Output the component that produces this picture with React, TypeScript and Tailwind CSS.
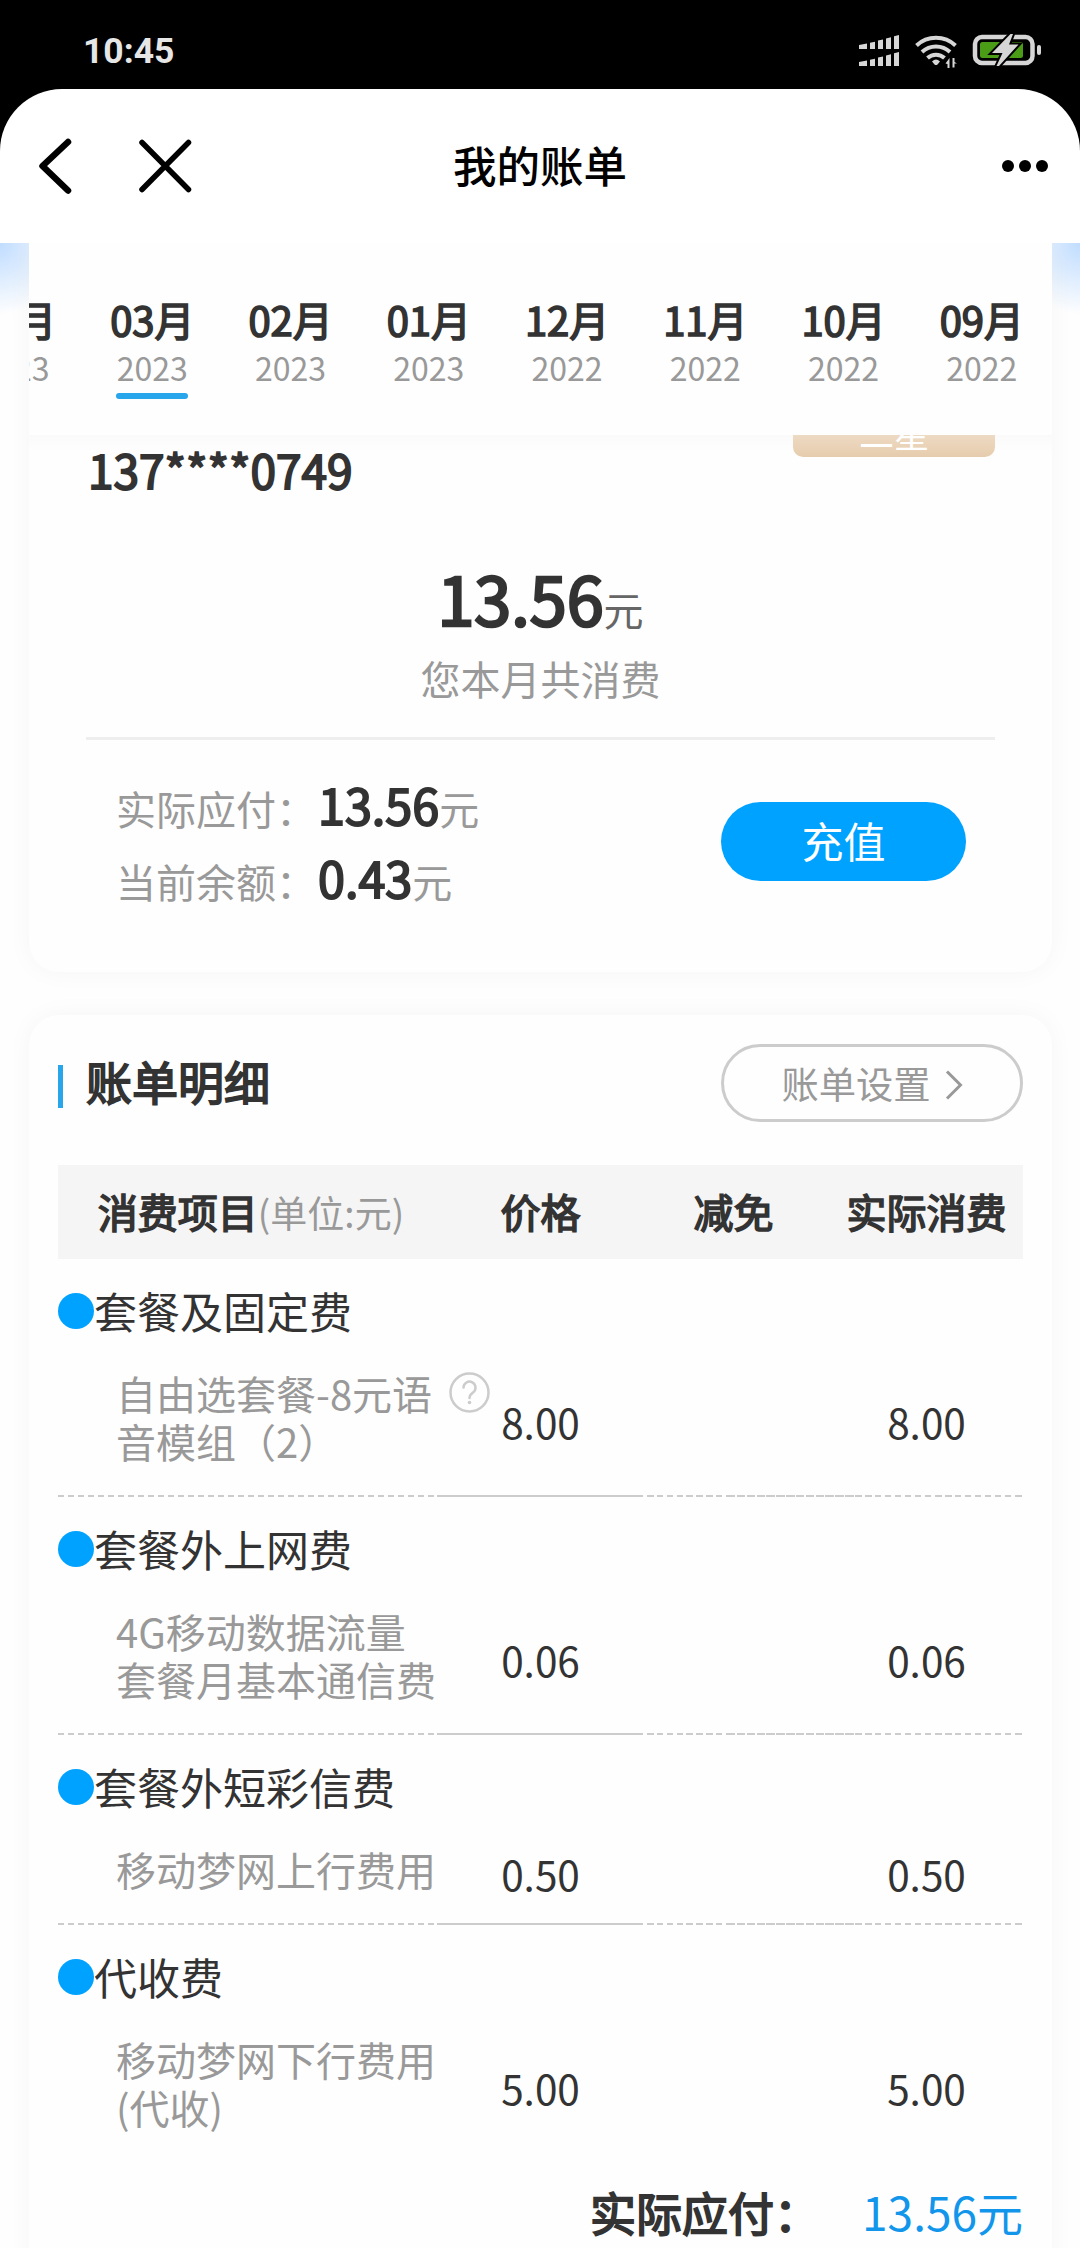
import { clsx } from 'clsx';

interface Month {
  month: string;
  year: string;
  active?: boolean;
}

interface BillSection {
  title: string;
  lines: string[];
  price: string;
  actual: string;
  help?: boolean;
}

const months: Month[] = [
  { month: '04月', year: '2023' },
  { month: '03月', year: '2023', active: true },
  { month: '02月', year: '2023' },
  { month: '01月', year: '2023' },
  { month: '12月', year: '2022' },
  { month: '11月', year: '2022' },
  { month: '10月', year: '2022' },
  { month: '09月', year: '2022' },
];

const sections: BillSection[] = [
  { title: '套餐及固定费', lines: ['自由选套餐-8元语', '音模组（2）'], price: '8.00', actual: '8.00', help: true },
  { title: '套餐外上网费', lines: ['4G移动数据流量', '套餐月基本通信费'], price: '0.06', actual: '0.06' },
  { title: '套餐外短彩信费', lines: ['移动梦网上行费用'], price: '0.50', actual: '0.50' },
  { title: '代收费', lines: ['移动梦网下行费用', '(代收)'], price: '5.00', actual: '5.00' },
];

// heavier text keeps the regular advance widths, only the strokes get thicker
const strong = '[-webkit-text-stroke:0.04em_currentColor]';

function StatusBar() {
  return (
    <div className="flex h-[89px] items-start justify-between bg-black pl-[83px] pr-[39px]">
      <span className="mt-[31px] font-[Roboto] text-[35.500px] leading-[41px] font-bold text-[#e6e6e6]">10:45</span>
      <svg className="mt-[33px]" width="183" height="36" viewBox="858 33 183 36" fill="#d6d6d6">
        <path d="M859 49v-4l8-1.6V49zM870 49v-6.2l5-1V49zM878 49v-8.4l5-1.2V49zM886 49V38.4l5-1.2V49zM894 49V36.2l5-1.2v14z" />
        <path d="M859 66v-4l8-1.6V66zM870 66v-6.2l5-1V66zM878 66v-8.4l5-1.2V66zM886 66V55.4l5-1.2V66zM894 66V53.2l5-1.2v14z" />
        <g fill="none" stroke="#d6d6d6" strokeWidth="4">
          <path d="M916.5 45.5a28.5 28.5 0 0 1 39 0" />
          <path d="M922 52a20.5 20.5 0 0 1 28 0" />
          <path d="M927.500 58a12.500 12.500 0 0 1 17 0" />
        </g>
        <path d="M932 61.500q4-4 8 0l-2.500 3q-1.500 1.200-3 0z" />
        <path d="M949.500 58v10h-2v-4l-2-.5zM952.500 67.500V58h2v4l2.500 1.500h-2.500v4z" />
        <rect x="975" y="37" width="57.500" height="26" rx="7" fill="none" stroke="#d6d6d6" strokeWidth="4.500" />
        <rect x="980" y="42" width="43" height="16" rx="2.500" fill="#4a9c17" />
        <rect x="1037" y="45" width="4" height="10" rx="2" />
        <path
          d="M1010.500 34L992 53h10.500l-6 13h2.500l19.500-21.500h-9.500l4-10.500z"
          stroke="#000"
          strokeWidth="4"
          paintOrder="stroke"
        />
      </svg>
    </div>
  );
}

function NavBar() {
  return (
    <div className="relative z-10 bg-black">
      <div className="grid h-[154px] grid-cols-3 items-center rounded-t-[62px] bg-white px-[38px]">
        <svg width="156" height="60" viewBox="38 136 156 60" fill="none" stroke="#000" strokeLinecap="round" strokeLinejoin="round">
          <path d="M68 142L42.500 166l25.500 24.500" strokeWidth="6.500" />
          <path d="M142 142.500l46.500 47M188.500 142.500l-46.500 47" strokeWidth="5.500" />
        </svg>
        <h1 className="-mt-0.5 text-center text-[43.500px] leading-[56px] font-medium text-black">我的账单</h1>
        <div className="-mr-[6px] flex justify-end gap-[5px]">
          <i className="size-3 rounded-full bg-black" />
          <i className="size-3 rounded-full bg-black" />
          <i className="size-3 rounded-full bg-black" />
        </div>
      </div>
    </div>
  );
}

function MonthTabs() {
  return (
    <div className="relative z-10 h-[192px] overflow-hidden bg-[#fefefe] pt-[54px]">
      <div className="-ml-[84px] flex">
        {months.map((m) => (
          <div key={m.month} className="flex w-[138.25px] shrink-0 flex-col items-center">
            <span className={clsx('text-[40px] leading-[44px]', strong)}>{m.month}</span>
            <span className="mt-2 text-[32px] leading-9 text-[#999]">{m.year}</span>
            {m.active && <span className="mt-2 h-1.5 w-[72px] rounded-full bg-[#27a6ec]" />}
          </div>
        ))}
      </div>
    </div>
  );
}

function AmountLine({ label, value }: { label: string; value: string }) {
  return (
    <p className="h-[73.300px] text-[48.500px] leading-[75px] whitespace-nowrap">
      <span className="text-[40px] leading-none text-[#999]">{label}：</span>
      <span className={clsx('ml-0.5', strong)}>{value}</span>
      <span className="text-[40px] leading-none text-[#999]">元</span>
    </p>
  );
}

function SummaryCard() {
  return (
    <section className="h-[729px] rounded-b-[30px] bg-[#fefefe] shadow-[0_0_26px_rgba(0,0,0,0.04)]">
      <MonthTabs />
      <div className="flex items-start justify-between px-[57px] shadow-[inset_0_20px_18px_-14px_rgba(0,0,0,0.025)]">
        <span className={clsx('ml-0.5 text-[46px] leading-[68px]', strong)}>137****0749</span>
        <span className="-mt-[26px] h-12 w-[202px] rounded-[10px] bg-linear-to-b from-[#f6ebdd] to-[#e6ccad] text-center text-[35px] leading-[48px] text-white">
          二星
        </span>
      </div>
      <div className="mt-[53px] h-20 text-center text-[66.500px] leading-[82px]">
        <span className={strong}>13.56</span>
        <span className="text-[40px] leading-none text-[#666]">元</span>
      </div>
      <p className="mt-[17px] text-center text-[40px] leading-[50px] text-[#999]">您本月共消费</p>
      <div className="mx-[57px] mt-[34px] h-[3px] bg-[#eee]" />
      <div className="mt-[27px] flex items-center justify-between pr-[86px] pl-[87px]">
        <div>
          <AmountLine label="实际应付" value="13.56" />
          <AmountLine label="当前余额" value="0.43" />
        </div>
        <button className="mt-0.5 h-[79px] w-[245px] rounded-full bg-[#00a2ff] pb-0.5 text-[42px] leading-[60px] text-white">
          充值
        </button>
      </div>
    </section>
  );
}

function HelpIcon() {
  return (
    <svg className="-mt-0.5 shrink-0" width="41" height="41" viewBox="0 0 41 41" fill="none" stroke="#ccc" strokeWidth="2.500">
      <circle cx="20.500" cy="20.500" r="19" />
      <path d="M14.500 15.500a6 6 0 1 1 9.500 5c-2.300 1.700-3.500 2.700-3.500 5.500" strokeLinecap="round" />
      <circle cx="20.500" cy="30.500" r="1.800" fill="#ccc" stroke="none" />
    </svg>
  );
}

function DashedRule() {
  return (
    <div className="flex h-0.5">
      <div className="w-[379px] bg-[repeating-linear-gradient(90deg,#ccc_0_6px,transparent_6px_10px)]" />
      <div className="w-[206px] bg-[#ccc]" />
      <div className="ml-1 w-[80px] bg-[repeating-linear-gradient(90deg,#ccc_0_6.500px,transparent_6.500px_9.850px)]" />
      <div className="w-[128px] bg-[repeating-linear-gradient(90deg,#ccc_0_8.500px,transparent_8.500px_9.850px)]" />
      <div className="flex-1 bg-[repeating-linear-gradient(90deg,#ccc_0_6.500px,transparent_6.500px_10px)]" />
    </div>
  );
}

function SectionRow({ section }: { section: BillSection }) {
  return (
    <div className="pt-[34px]">
      <div className="flex h-9 items-center">
        <i className="size-9 shrink-0 rounded-full bg-[#00a2ff]" />
        <span className="-mt-0.5 text-[43px] leading-9">{section.title}</span>
      </div>
      <div className="mt-10 grid grid-cols-[386px_193px_193px_193px] items-center pb-[30px]">
        <div className="pl-[58px] text-[40px] leading-[48px] whitespace-nowrap text-[#999]">
          {section.lines.map((line, i) => (
            <div key={line} className="flex items-center gap-[17px]">
              <span>{line}</span>
              {section.help && i === 0 && <HelpIcon />}
            </div>
          ))}
        </div>
        <span className="pt-2.5 text-center text-[40.500px] leading-[38px]">{section.price}</span>
        <span />
        <span className="pt-2.5 text-center text-[40.500px] leading-[38px]">{section.actual}</span>
      </div>
    </div>
  );
}

function DetailCard() {
  return (
    <section className="mt-[43px] h-[1300px] rounded-t-[30px] bg-[#fefefe] px-[29px] pt-[29px] shadow-[0_0_26px_rgba(0,0,0,0.04)]">
      <div className="flex h-[78px] items-center">
        <i className="mt-[7px] h-[43px] w-[5px] bg-[#27a6ec]" />
        <h2 className={clsx('-mt-[7px] ml-[23px] text-[46px] leading-[60px]', strong)}>账单明细</h2>
        <button className="ml-auto flex h-[78px] w-[302px] items-center justify-center gap-[14px] rounded-full border-[3px] border-[#ccc] text-[37.300px] text-[#999]">
          <span className="leading-[50px]">账单设置</span>
          <svg className="mt-1" width="18" height="30" viewBox="0 0 18 30" fill="none" stroke="#999" strokeWidth="3">
            <path d="M2 1.500L15.500 15 2 28.500" />
          </svg>
        </button>
      </div>

      <div className="mt-[43px] grid h-[94px] grid-cols-[386px_193px_193px_193px] items-center bg-[#f5f5f5] pb-[3px] text-center text-[40px] leading-[60px] whitespace-nowrap">
        <span>
          <span className={strong}>消费项目</span>
          <span className="text-[37px] leading-none text-[#999]">(单位:元)</span>
        </span>
        <span className={strong}>价格</span>
        <span className={strong}>减免</span>
        <span className={strong}>实际消费</span>
      </div>

      {sections.map((section, i) => (
        <div key={section.title}>
          <SectionRow section={section} />
          {i < sections.length - 1 && <DashedRule />}
        </div>
      ))}

      <div className="mt-5 flex justify-end gap-[42px] text-[46px] leading-[60px]">
        <span className={strong}>实际应付：</span>
        <span className="text-[#1296eb]">13.56元</span>
      </div>
    </section>
  );
}

export default function App() {
  return (
    <div
      lang="zh-CN"
      className="h-[2248px] w-[1080px] overflow-hidden bg-[#fefefe] font-['Noto_Sans_CJK_SC',sans-serif] text-[#333]"
    >
      <StatusBar />
      <NavBar />
      <main className="bg-[radial-gradient(ellipse_60px_72px_at_0_0,#bfdcff,transparent),radial-gradient(ellipse_60px_72px_at_100%_0,#bfdcff,transparent)] pr-[28px] pl-[29px]">
        <SummaryCard />
        <DetailCard />
      </main>
    </div>
  );
}
